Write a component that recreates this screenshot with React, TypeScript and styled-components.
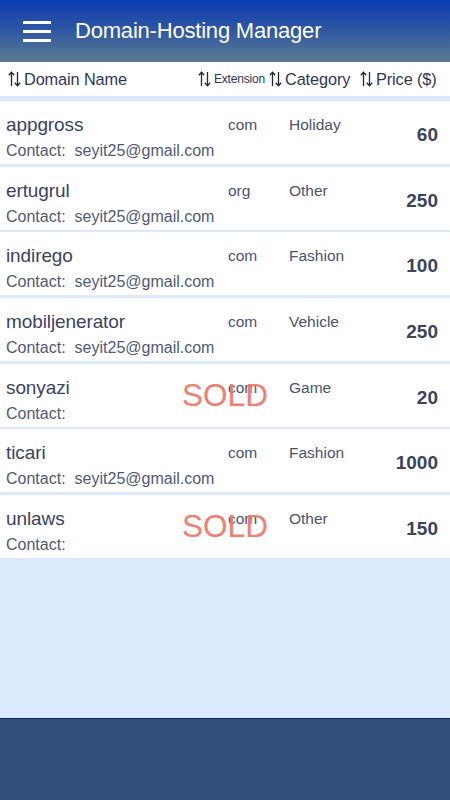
import React from 'react'
import styled, { createGlobalStyle } from 'styled-components'

const GlobalStyle = createGlobalStyle`
    html, body {
        margin: 0;
        padding: 0;
        background: #dde9fd;
        font-family: "Liberation Sans", Arial, sans-serif;
    }
`

const Page = styled.div`
    display: flex;
    flex-direction: column;
    height: 800px;
    width: 450px;
    overflow: hidden;
    background: #dde9fd;
`

const Header = styled.header`
    height: 62px;
    display: flex;
    align-items: center;
    gap: 24px;
    padding-left: 23px;
    box-sizing: border-box;
    background: linear-gradient(180deg, #0c3db2 0%, #2c55a4 45%, #5a7b8e 100%);
    color: #fff;
`

const Burger = styled.div`
    display: flex;
    flex-direction: column;
    gap: 6px;
    width: 28px;
    span {
        display: block;
        height: 3px;
        background: #fff;
    }
`

const Title = styled.h1`
    margin: 0;
    font-size: 22px;
    font-weight: normal;
    letter-spacing: -0.2px;
`

const ColumnBar = styled.div`
    height: 34px;
    background: #fff;
    color: #2c3754;
    font-size: 16px;
    margin-bottom: 5px;
`

const ColumnInner = styled.div`
    position: relative;
    width: 100%;
    height: 100%;
    display: flex;
    align-items: center;
`

const Sort = styled.div<{ $left: number }>`
    display: flex;
    align-items: center;
    gap: 3px;
    position: absolute;
    left: ${(p) => p.$left}px;
`

const ColumnLabel = styled.span<{ $small?: boolean }>`
    font-size: ${(p) => (p.$small ? '12px' : '16.3px')};
    letter-spacing: ${(p) => (p.$small ? '-0.2px' : '-0.1px')};
`

const List = styled.div`
    display: flex;
    flex-direction: column;
    gap: 2.67px;
`

const Row = styled.div`
    position: relative;
    height: 63px;
    background: #fff;
    display: grid;
    grid-template-columns: 222px 61px 1fr auto;
    padding: 0 12px 0 6px;
    box-sizing: border-box;
    color: #3a4360;
`

const NameCell = styled.div`
    display: flex;
    flex-direction: column;
    padding-top: 13px;
`

const Name = styled.div`
    font-size: 19px;
    letter-spacing: -0.1px;
    line-height: 22px;
`

const Contact = styled.div`
    font-size: 16px;
    line-height: 18px;
    margin-top: 6px;
    color: #505a74;
    white-space: nowrap;
    span {
        margin-left: 9px;
    }
`

const Small = styled.div`
    padding-top: 15px;
    font-size: 15.5px;
    line-height: 18px;
    color: #4a5470;
`

const Price = styled.div`
    align-self: center;
    text-align: right;
    font-size: 19px;
    font-weight: bold;
    color: #3a4360;
    padding-top: 5px;
`

const Sold = styled.div`
    position: absolute;
    left: 0;
    right: 0;
    top: 50%;
    transform: translateY(-50%);
    text-align: center;
    font-size: 31.5px;
    color: #f2786a;
    pointer-events: none;
    opacity: 0.95;
`

const Spacer = styled.div`
    flex: 1;
`

const Footer = styled.footer`
    height: 81px;
    background: #30507a;
    border-top: 1px solid #0d2650;
`

const SortIcon = () => (
    <svg width="13" height="16" viewBox="0 0 13 16" fill="none" stroke="#1f2838" strokeWidth="1.3">
        <path d="M3.5 15V1.5M0.8 4.2L3.5 1.3L6.2 4.2" />
        <path d="M9.5 1V14.5M6.8 11.8L9.5 14.7L12.2 11.8" />
    </svg>
)

type Domain = {
    name: string
    ext: string
    category: string
    price: number
    contact: string
    sold?: boolean
}

const domains: Domain[] = [
    { name: 'appgross', ext: 'com', category: 'Holiday', price: 60, contact: 'seyit25@gmail.com' },
    { name: 'ertugrul', ext: 'org', category: 'Other', price: 250, contact: 'seyit25@gmail.com' },
    { name: 'indirego', ext: 'com', category: 'Fashion', price: 100, contact: 'seyit25@gmail.com' },
    { name: 'mobiljenerator', ext: 'com', category: 'Vehicle', price: 250, contact: 'seyit25@gmail.com' },
    { name: 'sonyazi', ext: 'com', category: 'Game', price: 20, contact: '', sold: true },
    { name: 'ticari', ext: 'com', category: 'Fashion', price: 1000, contact: 'seyit25@gmail.com' },
    { name: 'unlaws', ext: 'com', category: 'Other', price: 150, contact: '', sold: true },
]

export default function App() {
    return (
        <Page>
            <GlobalStyle />
            <Header>
                <Burger>
                    <span />
                    <span />
                    <span />
                </Burger>
                <Title>Domain-Hosting Manager</Title>
            </Header>
            <ColumnBar>
                <ColumnInner>
                    <Sort $left={8}>
                        <SortIcon />
                        <ColumnLabel>Domain Name</ColumnLabel>
                    </Sort>
                    <Sort $left={198}>
                        <SortIcon />
                        <ColumnLabel $small>Extension</ColumnLabel>
                    </Sort>
                    <Sort $left={269}>
                        <SortIcon />
                        <ColumnLabel>Category</ColumnLabel>
                    </Sort>
                    <Sort $left={360}>
                        <SortIcon />
                        <ColumnLabel>Price ($)</ColumnLabel>
                    </Sort>
                </ColumnInner>
            </ColumnBar>
            <List>
                {domains.map((d) => (
                    <Row key={d.name}>
                        <NameCell>
                            <Name>{d.name}</Name>
                            <Contact>
                                Contact:<span>{d.contact}</span>
                            </Contact>
                        </NameCell>
                        <Small>{d.ext}</Small>
                        <Small>{d.category}</Small>
                        <Price>{d.price}</Price>
                        {d.sold && <Sold>SOLD</Sold>}
                    </Row>
                ))}
            </List>
            <Spacer />
            <Footer />
        </Page>
    )
}
